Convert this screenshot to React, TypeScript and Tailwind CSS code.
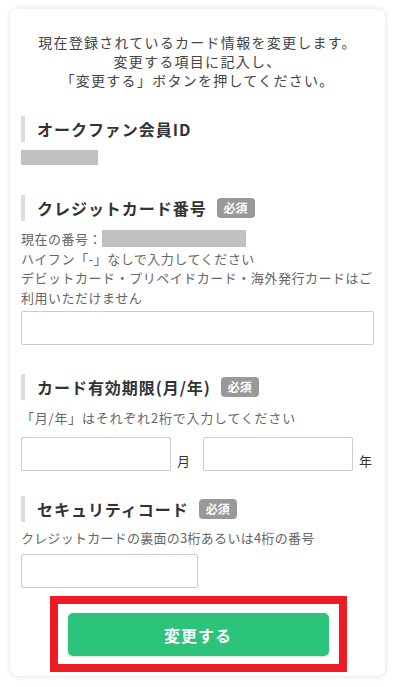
import React from 'react'

const font = { fontFamily: '"Noto Sans CJK JP", "Noto Sans", sans-serif' }

function Badge() {
  return (
    <span className="ml-[10px] inline-flex h-[20px] items-center rounded-[4px] bg-[#999] px-[7px] text-[12px] font-bold leading-none tracking-normal text-white">
      必須
    </span>
  )
}

function Heading({ children, required }: { children: React.ReactNode; required?: boolean }) {
  return (
    <div className="flex h-[26px] items-center border-l-4 border-[#dcdcdc] pl-3">
      <h3 className="text-[16px] font-bold leading-[26px] tracking-[0.06em] text-[#333]">{children}</h3>
      {required && <Badge />}
    </div>
  )
}

export default function App() {
  return (
    <div className="min-h-[687px] bg-white pl-[10px] pt-[9px]" style={font}>
      <div className="w-[375px] rounded-[8px] bg-white px-[11px] pb-[4px] pt-[24px] shadow-[0_0_6px_rgba(0,0,0,0.13)]">
        {/* Intro */}
        <p className="text-center text-[14px] leading-[19px] tracking-[0.09em] text-[#444]">
          現在登録されているカード情報を変更します。
          <br />
          変更する項目に記入し、
          <br />
          「変更する」ボタンを押してください。
        </p>

        {/* Member ID */}
        <div className="mt-[26px]">
          <Heading>オークファン会員ID</Heading>
          <div className="mt-[8px] h-[15px] w-[77px] bg-[#c0c0c0]" />
        </div>

        {/* Card number */}
        <div className="mt-[30px]">
          <Heading required>クレジットカード番号</Heading>
          <div className="mt-[8px] text-[13px] leading-[19.5px] tracking-[0.04em] text-[#666] [word-break:break-all]">
            <p className="flex items-center">
              現在の番号：
              <span className="inline-block h-[17px] w-[144px] bg-[#c0c0c0]" />
            </p>
            <p>ハイフン「-」なしで入力してください</p>
            <p>デビットカード・プリペイドカード・海外発行カードはご利用いただけません</p>
          </div>
          <input
            type="text"
            className="mt-[4px] block h-[34px] w-full rounded-[2px] border border-[#ccc] bg-white px-2 outline-none"
          />
        </div>

        {/* Expiry */}
        <div className="mt-[29px]">
          <Heading required>カード有効期限(月/年)</Heading>
          <p className="mt-[8px] text-[13px] leading-[19.5px] tracking-[0.06em] text-[#666]">
            「月/年」はそれぞれ2桁で入力してください
          </p>
          <div className="mt-[9px] flex items-end text-[13px] leading-[19px] text-[#333]">
            <input
              type="text"
              className="block h-[34px] w-[150px] rounded-[2px] border border-[#ccc] bg-white px-2 outline-none"
            />
            <span className="ml-[6px] pb-[1px]">月</span>
            <input
              type="text"
              className="ml-[13px] block h-[34px] w-[150px] rounded-[2px] border border-[#ccc] bg-white px-2 outline-none"
            />
            <span className="ml-[6px] pb-[1px]">年</span>
          </div>
        </div>

        {/* Security code */}
        <div className="mt-[25px]">
          <Heading required>セキュリティコード</Heading>
          <p className="mt-[6px] text-[13px] leading-[19.5px] tracking-[0.02em] text-[#666]">
            クレジットカードの裏面の3桁あるいは4桁の番号
          </p>
          <input
            type="text"
            className="mt-[7px] block h-[34px] w-[177px] rounded-[2px] border border-[#ccc] bg-white px-2 outline-none"
          />
        </div>

        {/* Submit */}
        <div className="mt-[8px] flex justify-center">
          <div className="ml-[1px] w-[297px] border-[8px] border-[#ed1c24] bg-white px-[10px] pb-[8px] pt-[9px]">
            <button
              type="button"
              className="flex h-[43px] w-full items-center justify-center rounded-[5px] bg-[#2cc47a] text-[16px] font-bold tracking-[0.06em] text-white shadow-[0_1px_2px_rgba(0,0,0,0.15)]"
            >
              変更する
            </button>
          </div>
        </div>
      </div>
    </div>
  )
}
